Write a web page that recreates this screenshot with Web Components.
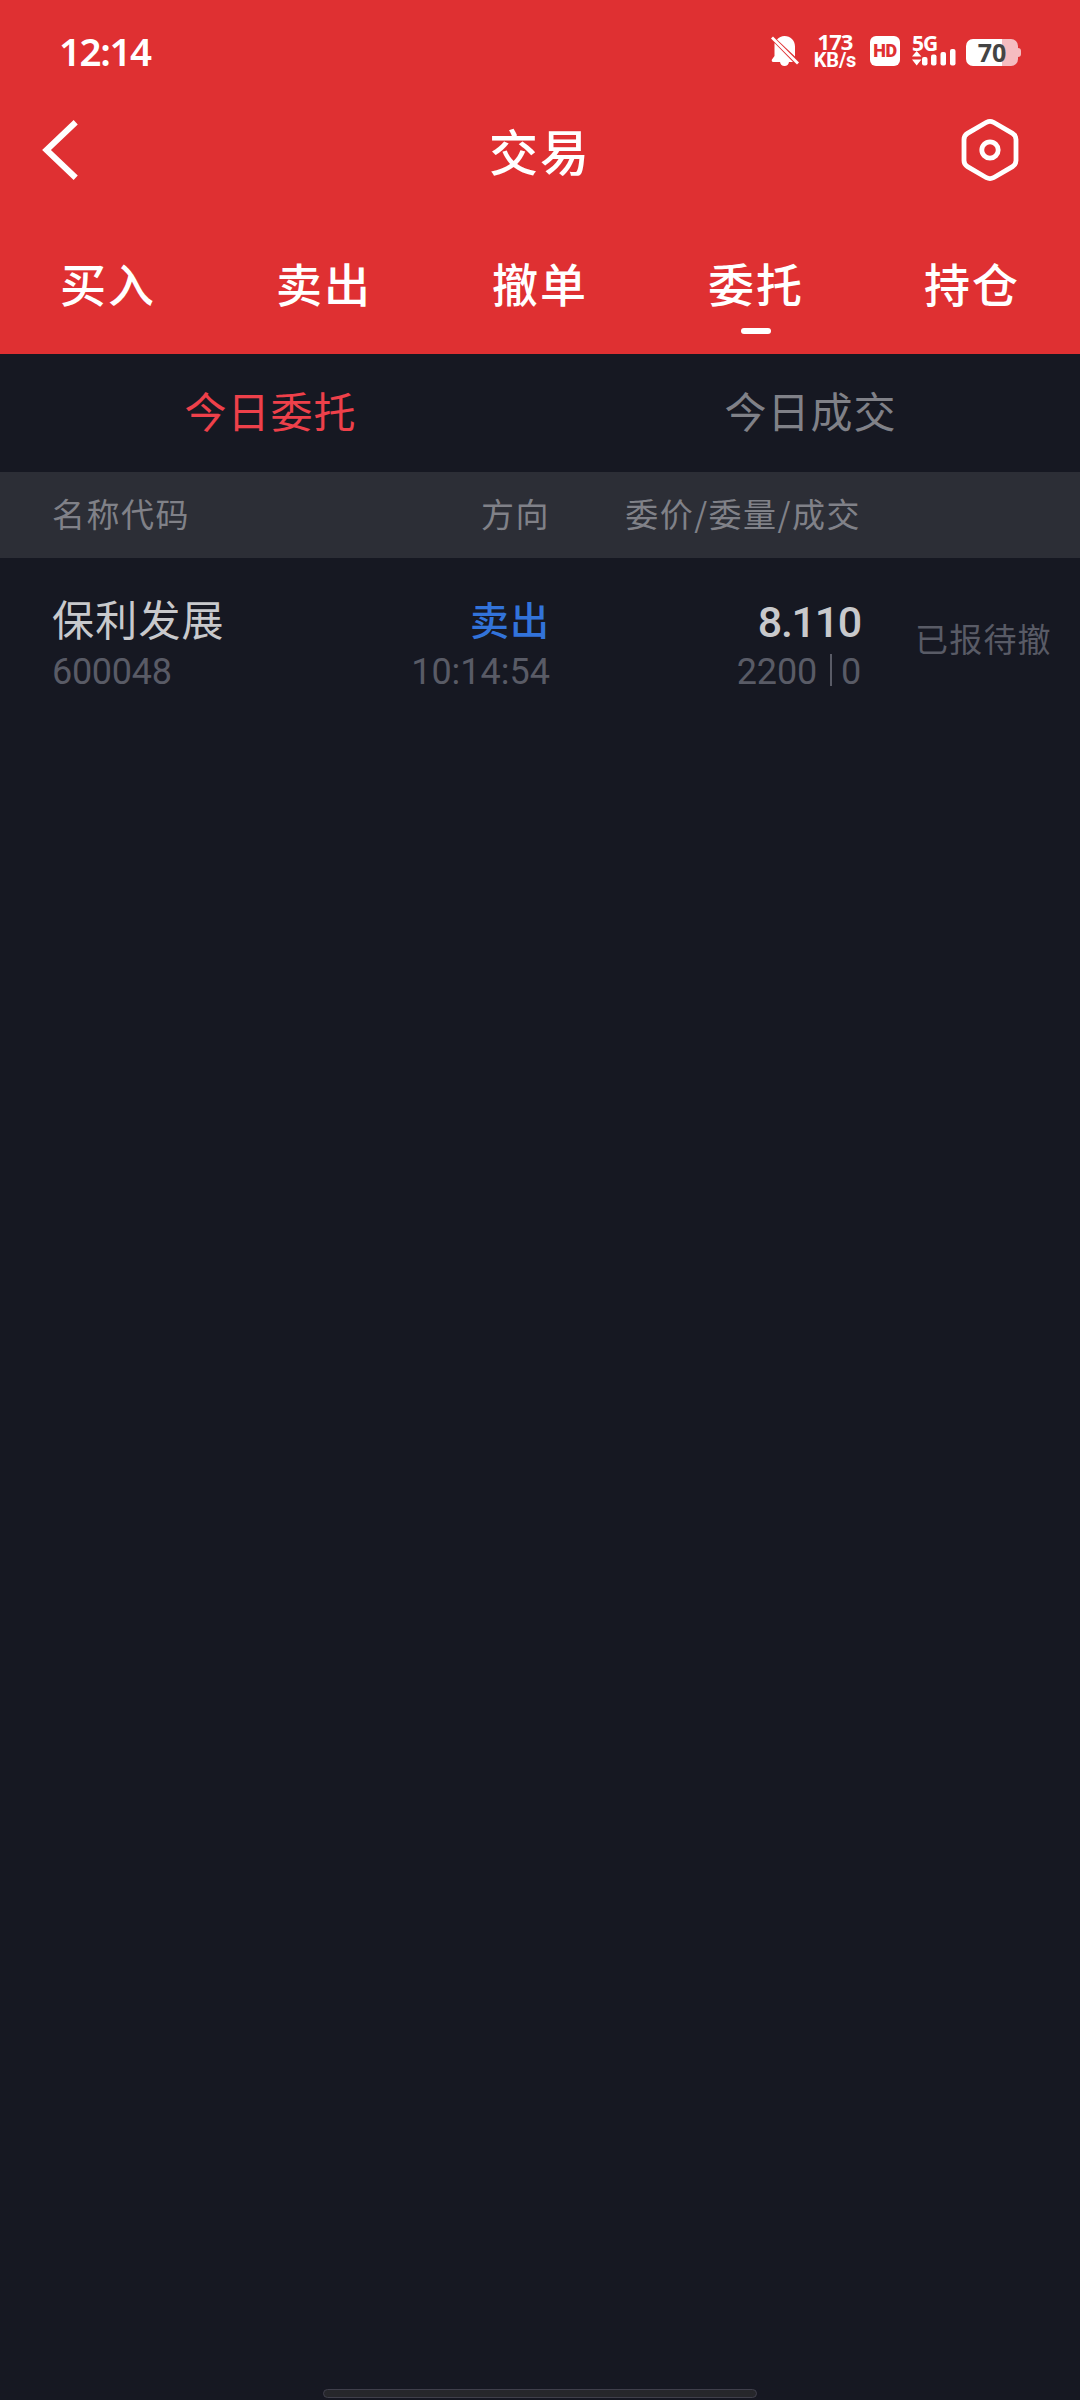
<!DOCTYPE html>
<html lang="zh-CN">
<head>
<meta charset="utf-8">
<title>交易</title>
<style>
html,body{margin:0;background:#161822}
body{width:1080px;height:2400px;overflow:hidden;font-family:"Noto Sans CJK SC",sans-serif}
</style>
</head>
<body>
<trade-app></trade-app>
<script>
const define = (name, html) => customElements.define(name, class extends HTMLElement {
  constructor() {
    super();
    this.attachShadow({ mode: 'open' }).innerHTML = html;
  }
});

define('status-bar', `
<style>
:host{display:flex;height:100px;box-sizing:border-box;color:#fff;font-family:"Noto Sans",sans-serif;font-weight:700;justify-content:space-between;align-items:flex-start;padding:0 59px 0 59px}
.time{font-size:38.500px;line-height:40px;margin-top:31px;letter-spacing:-1.400px;font-weight:600}
.right{display:flex;align-items:flex-start}
svg{display:block}
.speed{width:44px;margin:31px 0 0 14px;text-align:center;font-size:22px;line-height:20px;letter-spacing:-1px;white-space:nowrap}
.speed div+div{font:700 20px/17px Roboto,sans-serif;letter-spacing:-.2px;margin-top:1px}
.hd{width:30px;height:30px;border-radius:6px;background:#fff;color:#df3032;margin:36px 0 0 13px;font:900 18px/30px Roboto,sans-serif;text-align:center;letter-spacing:-.5px}
.net{margin:35px 0 0 12px;width:44px}
.net div{font-size:21px;line-height:17px;height:17px;letter-spacing:-1px}
.net svg{margin-top:-3px}
.bat{display:flex;align-items:center;margin:39px 0 0 10px}
.cell{width:52px;height:27px;border-radius:7px;background:linear-gradient(90deg,#fff 36px,#f5bcc0 36px);color:#444;font-size:25px;line-height:27px;text-align:center}
.nub{width:3px;height:9px;border-radius:0 3px 3px 0;background:#f5bcc0}
</style>
<span class="time">12:14</span>
<div class="right">
<svg style="margin-top:35px" width="28" height="32" viewBox="0 0 28 32"><path fill="#fff" d="M6 4.500C8 2.200 10.500 1 13.500 1c6 0 10.500 4.500 10.500 10.500V21.500zM3.500 8 22 27H18c-.5 2.500-2 4-4.500 4S9.500 29.500 9 27H2.500c-2 0-2.300-2-1-3.300l2-2.700z"/><path stroke="#fff" stroke-width="2.800" d="M1 2.500 27 28.500"/></svg>
<div class="speed"><div>173</div><div>KB/s</div></div>
<div class="hd">HD</div>
<div class="net"><div>5G</div><svg width="44" height="18" viewBox="0 0 44 18" fill="#fff"><path d="M0 7.500 4.700 2l4.700 5.500zM0 10.500h9.400l-4.700 6z"/><rect x="10" y="8" width="5.500" height="8.500" rx="2"/><rect x="19" y="5.500" width="5.500" height="11" rx="2"/><rect x="28.500" y="3" width="5.500" height="13.500" rx="2"/><rect x="38" y="0" width="5.500" height="16.500" rx="2"/></svg></div>
<div class="bat"><div class="cell">70</div><div class="nub"></div></div>
</div>`);

define('nav-bar', `
<style>
:host{display:flex;height:100px;align-items:center;justify-content:space-between;padding:0 59px 0 40px}
svg{display:block}
.l,.r{width:62px}
h1{margin:0;font-size:49px;font-weight:500;color:#fff;line-height:100px;height:100px;letter-spacing:2px;padding-left:19px}
</style>
<svg class="l" width="62" height="64" viewBox="40 118 62 64" fill="none" stroke="#fff" stroke-width="6"><path d="M75.700 122.300 46.500 150l29.200 27.700"/></svg>
<h1><slot></slot></h1>
<svg class="r" width="62" height="64" viewBox="959 118 62 64" fill="none" stroke="#fff" stroke-width="4.800"><path d="M986.500 122.300Q990 120.600 993.500 122.300L1012.500 133.400Q1016 135.500 1016 139.500V160.500Q1016 164.500 1012.500 166.600L993.500 177.700Q990 179.400 986.500 177.700L967.500 166.600Q964 164.500 964 160.500V139.500Q964 135.500 967.500 133.400Z"/><circle cx="990" cy="150" r="8.200"/></svg>`);

define('main-tab', `
<style>
:host{flex:1;display:flex;flex-direction:column;align-items:center;color:#fff;font-size:46px;font-weight:500;line-height:60px;padding-top:52px}
span{letter-spacing:2px;margin-right:0}
i{width:30px;height:6px;border-radius:3px;margin-top:16px}
:host([active]) i{background:#fff}
</style><span><slot></slot></span><i></i>`);

define('sub-tab', `
<style>
:host{flex:1;text-align:center;font-size:42px;line-height:112px;height:118px;color:#808188}
span{letter-spacing:1px;margin-right:-1px}
:host([active]){color:#ee404a}
</style><span><slot></slot></span>`);

define('list-head', `
<style>
:host{display:flex;height:86px;background:#2c2e36;color:#808188;font-size:33px;line-height:82px;letter-spacing:1.500px}
span{text-align:right;white-space:nowrap}
.a{width:248px;padding-left:52px;text-align:left}
.b{width:250px}.c{width:311px}
</style><span class="a">名称代码</span><span class="b">方向</span><span class="c">委价/委量/成交</span>`);

define('order-row', `
<style>
:host{display:flex;height:142px;padding-top:32px;box-sizing:border-box;font-size:42px;line-height:56px;color:#c8c9cc;white-space:nowrap}
.col{display:flex;flex-direction:column;align-items:flex-end}
.a{align-items:flex-start;width:248px;padding-left:52px;letter-spacing:1.200px}
.b{width:250px}.c{width:311px}
.s{display:flex;font:400 36px/42px Roboto,sans-serif;color:#595b66;letter-spacing:0;margin-top:5px}
.a .s{letter-spacing:-.3px}
.c .s{letter-spacing:-.2px}
.side{color:#3273da;font-size:39px;font-weight:500;letter-spacing:1px}
.p{font:500 43px/56px Roboto,sans-serif;height:56px;letter-spacing:-1.300px;padding-top:4px;margin-bottom:-4px}
.bar{width:2px;height:32px;margin:3px 9px 0 13px;background:#595b66}
.st{margin-left:54px;font-size:33px;line-height:96px;letter-spacing:1.200px;color:#595b66}
</style>
<div class="col a"><slot name="name"></slot><div class="s"><slot name="code"></slot></div></div>
<div class="col b"><div class="side"><slot name="side"></slot></div><div class="s"><slot name="time"></slot></div></div>
<div class="col c"><div class="p"><slot name="price"></slot></div><div class="s"><slot name="qty"></slot><i class="bar"></i><slot name="done"></slot></div></div>
<div class="st"><slot name="status"></slot></div>`);

define('trade-app', `
<style>
:host{display:flex;flex-direction:column;width:1080px;height:2400px;background:#161822}
header{background:#df3032;height:354px}
.tabs,.subs{display:flex}
main{flex:1}
.home{width:434px;height:9px;box-sizing:border-box;border:1.500px solid #3f3f4b;border-radius:5px;background:#26272b;margin:0 auto 2px}
</style>
<header>
<status-bar></status-bar>
<nav-bar>交易</nav-bar>
<nav class="tabs"><main-tab>买入</main-tab><main-tab>卖出</main-tab><main-tab>撤单</main-tab><main-tab active>委托</main-tab><main-tab>持仓</main-tab></nav>
</header>
<nav class="subs"><sub-tab active>今日委托</sub-tab><sub-tab>今日成交</sub-tab></nav>
<list-head></list-head>
<main><order-row><span slot="name">保利发展</span><span slot="code">600048</span><span slot="side">卖出</span><span slot="time">10:14:54</span><span slot="price">8.110</span><span slot="qty">2200</span><span slot="done">0</span><span slot="status">已报待撤</span></order-row></main>
<div class="home"></div>`);
</script>
</body>
</html>
